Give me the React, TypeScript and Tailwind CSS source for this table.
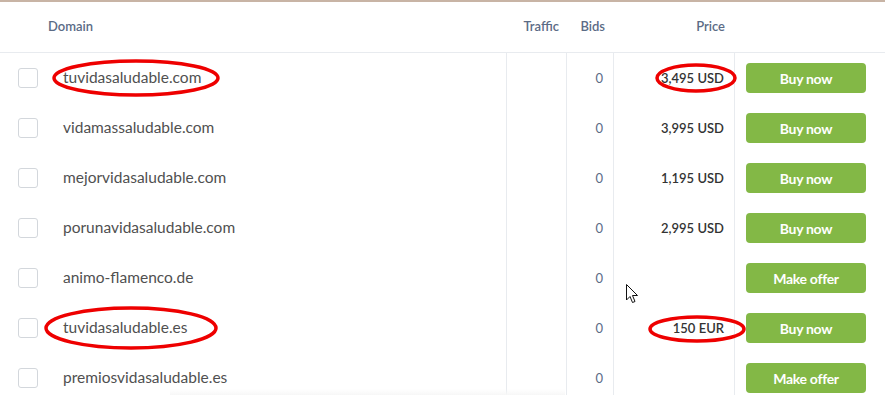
import React from "react";

type Row = { domain: string; price?: string; action: string };

const rows: Row[] = [
  { domain: "tuvidasaludable.com", price: "3,495 USD", action: "Buy now" },
  { domain: "vidamassaludable.com", price: "3,995 USD", action: "Buy now" },
  { domain: "mejorvidasaludable.com", price: "1,195 USD", action: "Buy now" },
  { domain: "porunavidasaludable.com", price: "2,995 USD", action: "Buy now" },
  { domain: "animo-flamenco.de", action: "Make offer" },
  { domain: "tuvidasaludable.es", price: "150 EUR", action: "Buy now" },
  { domain: "premiosvidasaludable.es", action: "Make offer" },
];

const grid = "grid grid-cols-[48px_458px_60px_47px_121px_151px]";

export default function App() {
  return (
    <div
      className="relative w-[885px] h-[395px] overflow-hidden bg-white"
      style={{ fontFamily: "Lato, 'Noto Sans', sans-serif" }}
    >
      <div className="border-t-2 border-[#c8b4a5]">
        <div className={`${grid} h-[51px] items-center border-b border-[#e8ebef] text-[13px] font-semibold text-[#5b6b86]`}>
          <div />
          <div>Domain</div>
          <div className="text-right pr-[7px]">Traffic</div>
          <div className="text-right pr-[8px]">Bids</div>
          <div className="text-right pr-[9px]">Price</div>
          <div />
        </div>
        {rows.map((r) => (
          <div key={r.domain} className={`${grid} h-[50px]`}>
            <div className="flex items-center pl-[18px]">
              <div className="w-[20px] h-[20px] rounded-[3px] border border-[#d3d7dc] bg-white" />
            </div>
            <div className="flex items-center pl-[15px] text-[15.5px] text-[#505050]">{r.domain}</div>
            <div className="border-l border-[#e8ebef]" />
            <div className="flex items-center justify-end pr-[10px] pt-[1px] border-l border-[#e8ebef] text-[13px] text-[#5b6b86]">0</div>
            <div className="flex items-center justify-end pr-[10px] pt-[1px] border-l border-[#e8ebef] text-[13px] font-semibold text-[#333]">
              {r.price ?? ""}
            </div>
            <div className="flex items-center pl-[11px] border-l border-[#e8ebef]">
              <button className="w-[120px] h-[30px] rounded-[4px] bg-[#83b846] text-white text-[14px] font-bold tracking-[-0.3px]">
                {r.action}
              </button>
            </div>
          </div>
        ))}
      </div>

      <div className="absolute left-[170px] right-[320px] top-[389px] h-[6px] bg-gradient-to-b from-transparent to-[#f7f7f7]" />

      <svg className="absolute inset-0 pointer-events-none" width="885" height="395">
        <ellipse cx="136" cy="78" rx="82" ry="17" fill="none" stroke="#ee0000" strokeWidth="3.5" />
        <ellipse cx="696" cy="78" rx="39" ry="13" fill="none" stroke="#ee0000" strokeWidth="3.5" />
        <ellipse cx="131" cy="328" rx="85" ry="20" fill="none" stroke="#ee0000" strokeWidth="3.5" />
        <ellipse cx="697" cy="329" rx="47" ry="12" fill="none" stroke="#ee0000" strokeWidth="3.5" />
        <path
          d="M626.5 284.5 L626.5 300 L630 296.5 L632.5 302.5 L635 301.5 L632.5 295.5 L637.5 295.5 Z"
          fill="#fff"
          stroke="#111"
          strokeWidth="1"
          strokeLinejoin="round"
        />
      </svg>
    </div>
  );
}
